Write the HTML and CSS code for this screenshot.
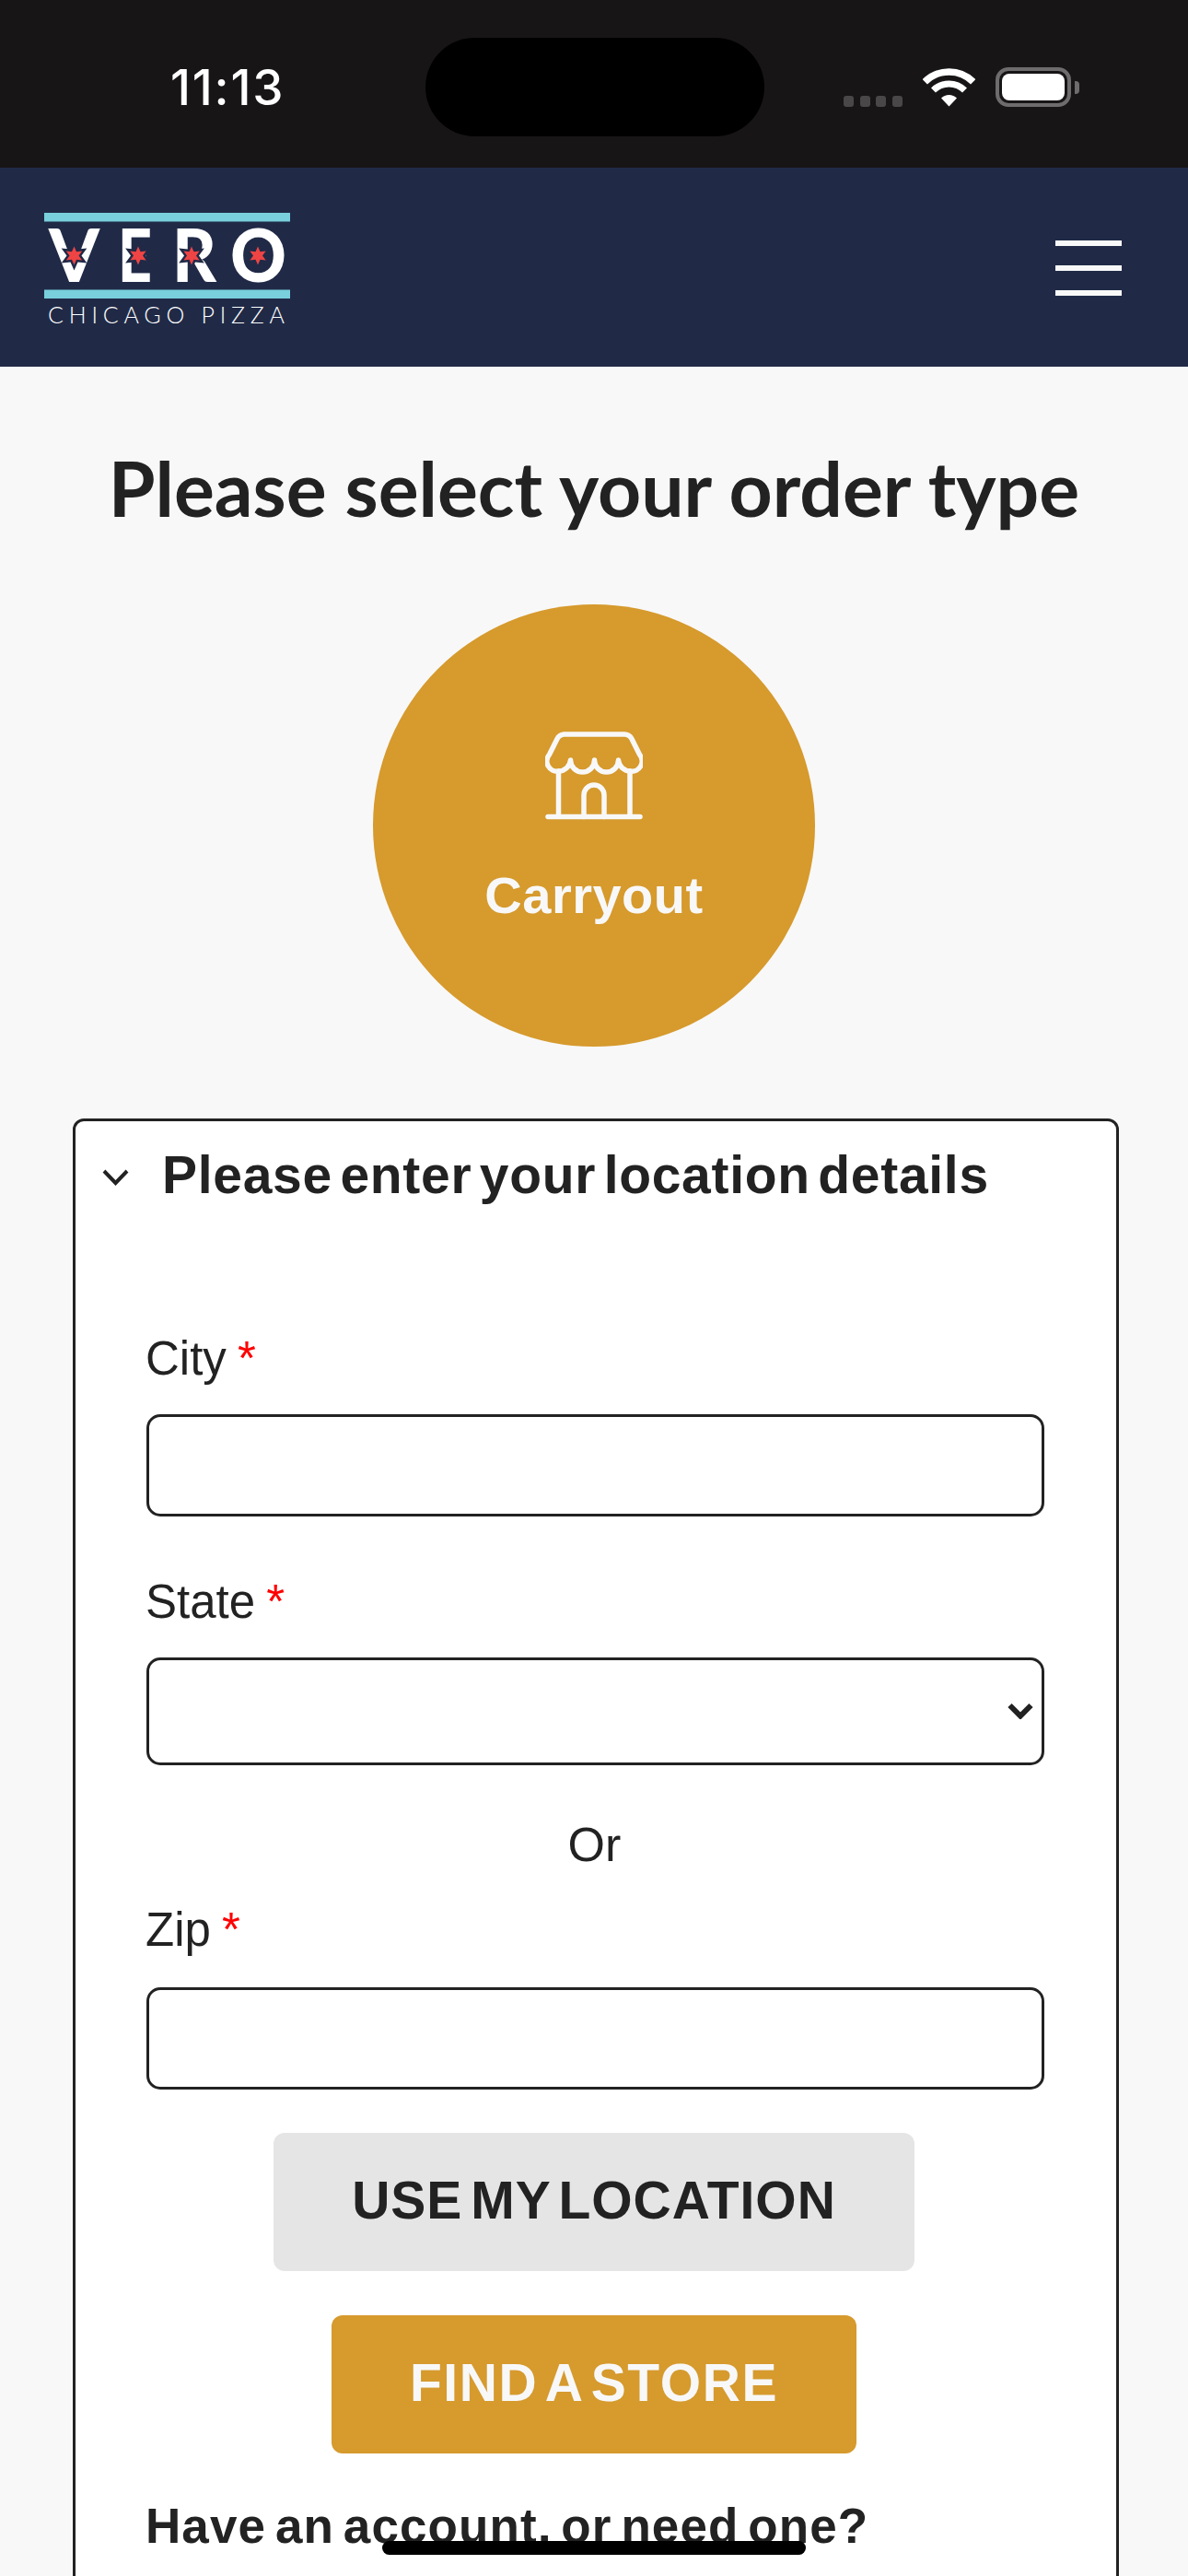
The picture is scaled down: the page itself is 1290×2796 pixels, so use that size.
FILE: index.html
```html
<!DOCTYPE html>
<html lang="en">
<head>
    <meta charset="UTF-8" />
    <meta name="viewport" content="width=device-width, initial-scale=1.0" />
    <title>Vero Chicago Pizza - Order Type</title>
    <link rel="stylesheet" href="styles.css">
</head>
<body>
    <div class="statusbar">
        <div class="time">11:13</div>
        <div class="island"></div>
        <div class="signal">
            <span></span><span></span><span></span><span></span>
        </div>
        <svg class="wifi" width="57" height="42" viewBox="0 0 57 42">
            <path d="M2.3 14.8a37 37 0 0 1 52.4 0" fill="none" stroke="#fff" stroke-width="7.5" />
            <path d="M11.5 24a24 24 0 0 1 34 0" fill="none" stroke="#fff" stroke-width="7" />
            <path d="M28.5 41.5L20 32.5a12 12 0 0 1 17 0z" fill="#fff" />
        </svg>
        <div class="battery">
            <div class="battery-fill"></div>
        </div>
        <div class="battery-nub"></div>
    </div>

    <nav class="navbar">
        <svg class="logo" width="288" height="170" viewBox="-10 -30 288 170">
            <rect x="0" y="0" width="267" height="9.500" fill="#79d0dc" />
            <rect x="0" y="83.500" width="267" height="9.500" fill="#79d0dc" />
            <g class="logo-letters">
                <text x="5" y="75" textLength="55" lengthAdjust="spacingAndGlyphs">V</text>
                <text x="80" y="75" textLength="37" lengthAdjust="spacingAndGlyphs">E</text>
                <text x="139" y="75" textLength="48" lengthAdjust="spacingAndGlyphs">R</text>
                <text x="202" y="75" textLength="61" lengthAdjust="spacingAndGlyphs">O</text>
            </g>
            <g fill="#202a47">
                <polygon transform="translate(32.500 46.500) scale(1.6)" points="0,-10 2.5,-4.33 8.66,-5 5,0 8.66,5 2.5,4.33 0,10 -2.5,4.33 -8.66,5 -5,0 -8.66,-5 -2.5,-4.33" />
                <polygon transform="translate(102 46.500) scale(1.6)" points="0,-10 2.5,-4.33 8.66,-5 5,0 8.66,5 2.5,4.33 0,10 -2.5,4.33 -8.66,5 -5,0 -8.66,-5 -2.5,-4.33" />
                <polygon transform="translate(160 46.500) scale(1.6)" points="0,-10 2.5,-4.33 8.66,-5 5,0 8.66,5 2.5,4.33 0,10 -2.5,4.33 -8.66,5 -5,0 -8.66,-5 -2.5,-4.33" />
            </g>
            <g fill="#ef4444">
                <polygon transform="translate(32.500 46.500)" points="0,-10 2.5,-4.33 8.66,-5 5,0 8.66,5 2.5,4.33 0,10 -2.5,4.33 -8.66,5 -5,0 -8.66,-5 -2.5,-4.33" />
                <polygon transform="translate(102 46.500)" points="0,-10 2.5,-4.33 8.66,-5 5,0 8.66,5 2.5,4.33 0,10 -2.5,4.33 -8.66,5 -5,0 -8.66,-5 -2.5,-4.33" />
                <polygon transform="translate(160 46.500)" points="0,-10 2.5,-4.33 8.66,-5 5,0 8.66,5 2.5,4.33 0,10 -2.5,4.33 -8.66,5 -5,0 -8.66,-5 -2.5,-4.33" />
                <polygon transform="translate(232 46.500)" points="0,-10 2.5,-4.33 8.66,-5 5,0 8.66,5 2.5,4.33 0,10 -2.5,4.33 -8.66,5 -5,0 -8.66,-5 -2.5,-4.33" />
            </g>
            <text class="logo-tag" x="4" y="120" textLength="257">CHICAGO PIZZA</text>
        </svg>
        <div class="menu-btn">
            <span></span><span></span><span></span>
        </div>
    </nav>

    <main class="content">
        <h1>Please select your order type</h1>

        <div class="order-type">
            <svg class="store-icon" width="106" height="96" viewBox="0 0 106 96" fill="none" stroke="#f8f8f8" stroke-width="5.500" stroke-linecap="round" stroke-linejoin="round">
                <path d="M20 3H86a9 9 0 0 1 8 5l8.500 17a11 11 0 0 1-10 18a13 13 0 0 1-13-12a13 13 0 0 1-26 0a13 13 0 0 1-26 0a13 13 0 0 1-13 12a11 11 0 0 1-10-18l8.500-17a9 9 0 0 1 8-5z" />
                <path d="M14.500 43V92.500M92 43V92.500M3 92.500H103" />
                <path d="M42 92.500V69a11 11 0 0 1 22 0V92.500" />
            </svg>
            <span>Carryout</span>
        </div>

        <section class="card">
            <div class="card-head">
                <svg class="card-chevron" width="29" height="18" viewBox="0 0 29 18">
                    <path d="M2 2L14.500 15L27 2" fill="none" stroke="#222" stroke-width="4" />
                </svg>
                <h2>Please enter your location details</h2>
            </div>

            <form class="location-form">
                <label class="city-label" for="city">City <span class="req">*</span></label>
                <input type="text" id="city" />

                <label class="state-label" for="state">State <span class="req">*</span></label>
                <div class="select-wrap">
                    <select id="state"></select>
                    <svg class="select-chevron" width="28" height="18" viewBox="0 0 28 18">
                        <path d="M2.500 3L14 14.500L25.500 3" fill="none" stroke="#222" stroke-width="6" />
                    </svg>
                </div>

                <p class="or">Or</p>

                <label class="zip-label" for="zip">Zip <span class="req">*</span></label>
                <input type="text" id="zip" />

                <button type="button" class="locBtn">USE MY LOCATION</button>
                <button type="button" class="findBtn">FIND A STORE</button>

                <p class="account">Have an account, or need one?</p>
            </form>
        </section>
    </main>

    <div class="home-bar"></div>
</body>
</html>
```

FILE: styles.css
```css
* {
    margin: 0;
    padding: 0;
    box-sizing: border-box;
}

html, body {
    height: 2796px;
    overflow: hidden;
}

body {
    background-color: #f8f8f8;
    color: #222;
    font-family: 'Liberation Sans', sans-serif;
    position: relative;
}

/* status bar */
.statusbar {
    height: 182px;
    background-color: #181516;
    display: flex;
    align-items: flex-start;
}

.time {
    color: #fff;
    font-family: 'Inter', sans-serif;
    font-weight: 500;
    font-size: 53px;
    letter-spacing: 1.8px;
    line-height: 60px;
    margin-left: 185px;
    margin-top: 65px;
    width: 122px;
    white-space: nowrap;
}

.island {
    width: 368px;
    height: 107px;
    border-radius: 54px;
    background-color: #000;
    margin-left: 155px;
    margin-top: 41px;
}

.signal {
    display: flex;
    gap: 6.5px;
    margin-left: 86px;
    margin-top: 104px;
}

.signal span {
    width: 11px;
    height: 12px;
    border-radius: 3px;
    background-color: #4a4748;
}

.wifi {
    margin-left: 22px;
    margin-top: 74px;
}

.battery {
    width: 82px;
    height: 43px;
    border: 4px solid #6e6c6d;
    border-radius: 14px;
    margin-left: 22px;
    margin-top: 73px;
    padding: 3px;
}

.battery-fill {
    width: 100%;
    height: 100%;
    background-color: #fff;
    border-radius: 8px;
}

.battery-nub {
    width: 5px;
    height: 14px;
    background-color: #6e6c6d;
    border-radius: 0 4px 4px 0;
    margin-left: 4px;
    margin-top: 88px;
}

/* nav */
.navbar {
    height: 216px;
    background-color: #202a47;
    display: flex;
    justify-content: space-between;
    align-items: flex-start;
    padding: 19px 72px 0 38px;
}

.logo-letters text {
    fill: #fff;
    font-family: 'Lato', sans-serif;
    font-weight: 900;
    font-size: 80px;
}

.logo-tag {
    fill: #fff;
    font-family: 'Lato', sans-serif;
    font-weight: 300;
    font-size: 25px;
}

.menu-btn {
    display: flex;
    flex-direction: column;
    gap: 21px;
    width: 72px;
    margin-top: 60px;
}

.menu-btn span {
    height: 6px;
    background-color: #f8f8f8;
}

/* page */
.content {
    padding-top: 84px;
}

h1 {
    font-family: 'Lato', sans-serif;
    font-weight: 700;
    font-size: 82.2px;
    line-height: 96px;
    text-align: center;
    color: #222;
}

.order-type {
    width: 480px;
    height: 480px;
    border-radius: 50%;
    background-color: #d69a2d;
    margin: 78px auto 0;
    display: flex;
    flex-direction: column;
    align-items: center;
    padding-top: 138px;
    color: #f8f8f8;
    font-weight: 700;
    font-size: 56px;
    letter-spacing: 0.5px;
    line-height: 62px;
}

.store-icon {
    margin-bottom: 51px;
}

.card {
    background-color: #fff;
    border: 3px solid #222;
    border-radius: 12px;
    width: 1136px;
    margin: 78px 0 0 79px;
    padding: 0 78px 0 77px;
    height: 1700px;
}

.card-head {
    display: flex;
    align-items: center;
    margin-left: -48px;
    padding-top: 26px;
}

.card-chevron {
    margin-right: 36px;
    margin-top: 6px;
}

h2 {
    font-size: 57px;
    line-height: 64px;
    font-weight: 700;
    letter-spacing: 0.7px;
    word-spacing: -8px;
    white-space: nowrap;
}

.location-form {
    display: flex;
    flex-direction: column;
    align-items: center;
}

label {
    align-self: flex-start;
    font-size: 51px;
    line-height: 58px;
    margin-bottom: 31px;
    margin-left: -1px;
}

.city-label {
    margin-top: 139px;
}

.state-label {
    margin-top: 64px;
}

.zip-label {
    margin-top: 35px;
    margin-bottom: 33px;
}

.req {
    color: #f00;
    margin-left: -2px;
}

input[type="text"] {
    width: 100%;
    height: 111px;
    border: 3px solid #222;
    border-radius: 15px;
    background-color: #fff;
    outline: none;
}

.select-wrap {
    width: 100%;
    position: relative;
}

select {
    display: block;
    width: 100%;
    height: 117px;
    border: 3px solid #222;
    border-radius: 15px;
    background-color: #fff;
    appearance: none;
    outline: none;
}

.select-chevron {
    position: absolute;
    right: 12px;
    top: 49px;
}

.or {
    font-size: 52px;
    line-height: 58px;
    margin-top: 57px;
    margin-right: 2px;
}

button {
    border: none;
    border-radius: 12px;
    height: 150px;
    font-family: 'Liberation Sans', sans-serif;
    font-weight: 700;
    font-size: 57px;
    word-spacing: -8px;
    padding-bottom: 4px;
    margin-top: 48px;
    margin-right: 3px;
}

.locBtn {
    width: 696px;
    background-color: #e5e5e5;
    color: #222;
    letter-spacing: 1px;
    margin-top: 47px;
}

.findBtn {
    width: 570px;
    background-color: #d69a2d;
    color: #f8f8f8;
    letter-spacing: 1.6px;
}

.account {
    align-self: flex-start;
    font-size: 53px;
    line-height: 58px;
    font-weight: 700;
    letter-spacing: 1.1px;
    word-spacing: -6px;
    margin-top: 50px;
    margin-left: -1px;
    white-space: nowrap;
}

.home-bar {
    position: absolute;
    left: 415px;
    top: 2758px;
    width: 460px;
    height: 15px;
    border-radius: 8px;
    background-color: #000;
}
```
